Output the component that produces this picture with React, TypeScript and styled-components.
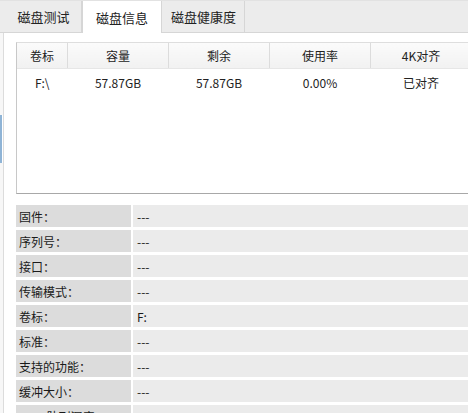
import React from 'react';
import styled, { createGlobalStyle } from 'styled-components';

const GlobalStyle = createGlobalStyle`
  html, body {
    margin: 0;
    padding: 0;
    background: #ffffff;
  }
  body {
    font-family: "Microsoft YaHei", "Noto Sans CJK SC", "Liberation Sans", sans-serif;
    font-size: 12px;
    color: #1a1a1a;
  }
`;

const Window = styled.div`
  display: flex;
  width: 468px;
  height: 413px;
  overflow: hidden;
  background: #ffffff;
`;

const EdgeStrip = styled.div`
  display: flex;
  flex-direction: column;
  width: 3px;
  padding-top: 33px;
  border-right: 1px solid #dcdcdc;
  flex-shrink: 0;
`;

const EdgePart = styled.div<{ $blue?: boolean; $h?: number }>`
  height: ${(p) => (p.$h ? `${p.$h}px` : 'auto')};
  flex: ${(p) => (p.$h ? '0 0 auto' : '1')};
  background: ${(p) => (p.$blue ? '#8fb4d6' : '#f7f7f7')};
  width: ${(p) => (p.$blue ? '2px' : '3px')};
`;

const Main = styled.div`
  flex: 1;
  display: flex;
  flex-direction: column;
  min-width: 0;
`;

const TabBar = styled.div`
  display: flex;
  flex-shrink: 0;
  height: 33px;
  margin-left: -4px;
  padding-left: 5px;
  background: #ececec;
  border-top: 1px solid #e2e2e2;
  border-bottom: 1px solid #d6d6d6;
  box-sizing: border-box;
`;

const Tab = styled.div<{ $active?: boolean; $w: number }>`
  width: ${(p) => p.$w}px;
  display: flex;
  align-items: center;
  justify-content: center;
  font-size: 13px;
  color: #222;
  background: ${(p) => (p.$active ? '#ffffff' : 'transparent')};
  margin-bottom: ${(p) => (p.$active ? '-1px' : '0')};
  border-left: 1px solid ${(p) => (p.$active ? '#d6d6d6' : 'transparent')};
  border-right: 1px solid #d6d6d6;
  box-sizing: border-box;
`;

const Content = styled.div`
  flex: 1;
  display: flex;
  flex-direction: column;
  padding: 9px 0 0 12px;
  min-height: 0;
`;

const ListBox = styled.div`
  flex-shrink: 0;
  height: 152px;
  margin-right: -20px;
  border: 1px solid #a8a8a8;
  border-top-color: #dedede;
  border-left-color: #c8c8c8;
  border-right: none;
  box-sizing: border-box;
  background: #ffffff;
`;

const ListTable = styled.table`
  border-collapse: collapse;
  table-layout: fixed;
`;

const HeadCell = styled.th<{ $w: number }>`
  width: ${(p) => p.$w}px;
  height: 25px;
  padding: 0;
  font-weight: normal;
  font-size: 12px;
  color: #222;
  text-align: center;
  background: linear-gradient(#fbfbfb, #f1f1f1);
  border-right: 1px solid #dcdcdc;
  border-bottom: 1px solid #e6e6e6;
`;

const DataCell = styled.td`
  height: 27px;
  padding: 0;
  text-align: center;
  font-size: 12px;
  color: #222;
`;

const InfoList = styled.div`
  display: flex;
  flex-direction: column;
  gap: 3px;
  margin-top: 11px;
  margin-right: -20px;
`;

const InfoRow = styled.div`
  display: flex;
  gap: 2px;
  height: 22px;
  flex-shrink: 0;
`;

const InfoLabel = styled.div`
  width: 115px;
  flex-shrink: 0;
  display: flex;
  align-items: center;
  padding-left: 3px;
  box-sizing: border-box;
  background: #dcdcdc;
  color: #1a1a1a;
  font-size: 12px;
`;

const InfoValue = styled.div`
  flex: 1;
  display: flex;
  align-items: center;
  padding-left: 4px;
  background: #ebebeb;
  color: #1a1a1a;
  font-size: 12px;
`;

const columns = [
  { key: 'label', title: '卷标', w: 50 },
  { key: 'size', title: '容量', w: 100 },
  { key: 'free', title: '剩余', w: 100 },
  { key: 'usage', title: '使用率', w: 100 },
  { key: 'align', title: '4K对齐', w: 100 },
];

const drives = [
  { label: 'F:\\', size: '57.87GB', free: '57.87GB', usage: '0.00%', align: '已对齐' },
];

const infoRows = [
  { name: '固件：', value: '---' },
  { name: '序列号：', value: '---' },
  { name: '接口：', value: '---' },
  { name: '传输模式：', value: '---' },
  { name: '卷标：', value: 'F:' },
  { name: '标准：', value: '---' },
  { name: '支持的功能：', value: '---' },
  { name: '缓冲大小：', value: '---' },
  { name: 'NCQ 队列深度：', value: '---' },
];

const App: React.FC = () => {
  return (
    <>
      <GlobalStyle />
      <Window>
        <EdgeStrip>
          <EdgePart $h={82} />
          <EdgePart $blue $h={48} />
          <EdgePart />
        </EdgeStrip>
        <Main>
          <TabBar>
            <Tab $w={77}>磁盘测试</Tab>
            <Tab $w={80} $active>磁盘信息</Tab>
            <Tab $w={83}>磁盘健康度</Tab>
          </TabBar>
          <Content>
            {/* drive list */}
            <ListBox>
              <ListTable>
                <thead>
                  <tr>
                    {columns.map((c) => (
                      <HeadCell key={c.key} $w={c.w}>{c.title}</HeadCell>
                    ))}
                  </tr>
                </thead>
                <tbody>
                  {drives.map((d) => (
                    <tr key={d.label}>
                      <DataCell>{d.label}</DataCell>
                      <DataCell>{d.size}</DataCell>
                      <DataCell>{d.free}</DataCell>
                      <DataCell>{d.usage}</DataCell>
                      <DataCell>{d.align}</DataCell>
                    </tr>
                  ))}
                </tbody>
              </ListTable>
            </ListBox>

            {/* disk details */}
            <InfoList>
              {infoRows.map((r) => (
                <InfoRow key={r.name}>
                  <InfoLabel>{r.name}</InfoLabel>
                  <InfoValue>{r.value}</InfoValue>
                </InfoRow>
              ))}
            </InfoList>
          </Content>
        </Main>
      </Window>
    </>
  );
};

export default App;
